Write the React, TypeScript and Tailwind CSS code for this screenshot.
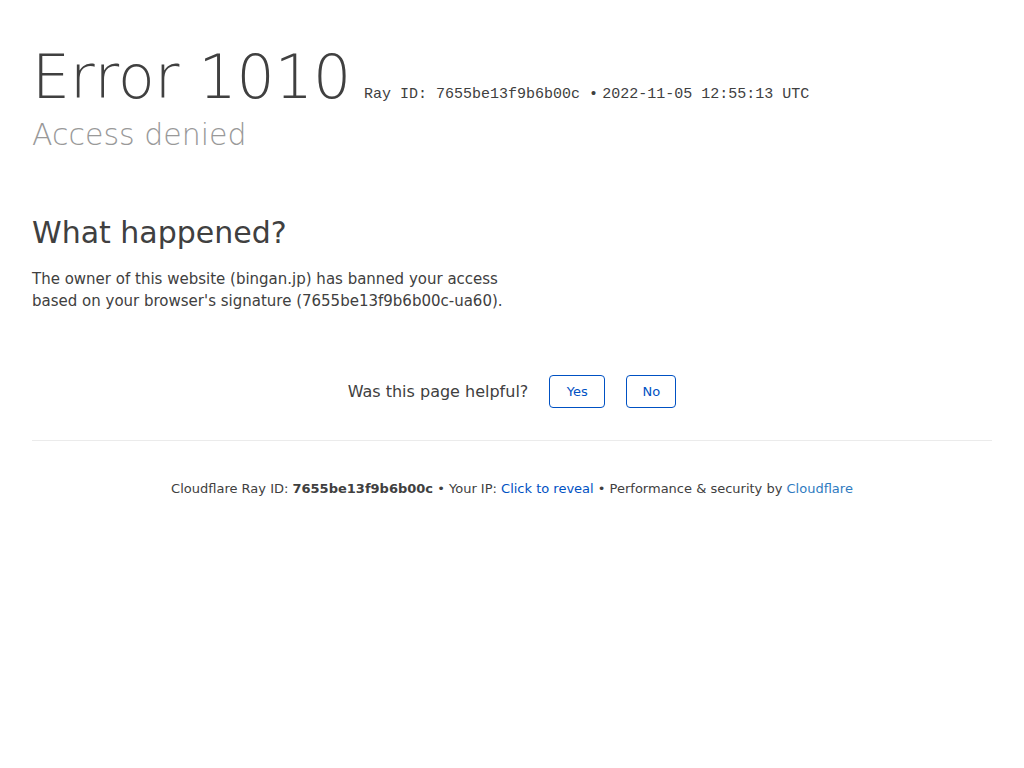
const sans = "font-['DejaVu_Sans',sans-serif]";
const mono = "font-['Liberation_Mono',monospace]";

export default function App() {
  return (
    <div className={`${sans} min-h-[768px] bg-white px-8 text-[#404040]`}>
      <header className="pt-[47px]">
        <h1 className="flex items-baseline gap-[13px]">
          <span className="text-[60px] leading-[60px] font-extralight">Error 1010</span>
          <small className={`${mono} text-[15px]`}>
            Ray ID: 7655be13f9b6b00c •<span className="ml-[4px]">2022-11-05 12:55:13 UTC</span>
          </small>
        </h1>
        <h2 className="mt-[13px] text-[30px] leading-[30px] font-extralight text-[#999999]">Access denied</h2>
      </header>

      <section className="mt-[68px]">
        <h2 className="text-[30px] leading-[30px] font-normal">What happened?</h2>
        <p className="mt-[20px] w-[480px] text-[15px] leading-[22px]">
          The owner of this website (bingan.jp) has banned your access based on your browser's signature (7655be13f9b6b00c-ua60).
        </p>
      </section>

      <div className="mt-[63px] flex items-center justify-center pb-8">
        <span className="text-[16px]">Was this page helpful?</span>
        <button className="ml-[21px] h-[33px] w-[56px] rounded-[4px] border border-[#0051c3] text-[13px] text-[#0051c3]">Yes</button>
        <button className="ml-[21px] h-[33px] w-[50px] rounded-[4px] border border-[#0051c3] text-[13px] text-[#0051c3]">No</button>
      </div>

      <footer className="border-t border-[#ebebeb] pt-[38px] text-center text-[13px]">
        Cloudflare Ray ID: <strong className="font-bold">7655be13f9b6b00c</strong> • Your IP:{" "}
        <span className="text-[#0051c3]">Click to reveal</span> • Performance &amp; security by{" "}
        <span className="text-[#2f7bbf]">Cloudflare</span>
      </footer>
    </div>
  );
}
